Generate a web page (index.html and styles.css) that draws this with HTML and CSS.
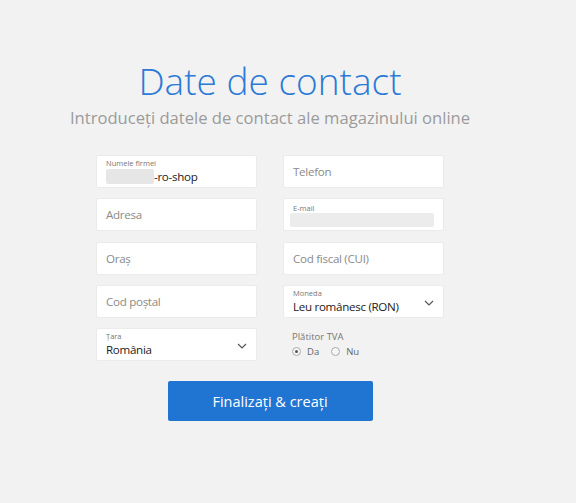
FILE: index.html
```html
<!DOCTYPE html>
<html lang="ro">
<head>
    <meta charset="UTF-8">
    <meta name="viewport" content="width=device-width, initial-scale=1.0">
    <title>Date de contact</title>
    <link rel="stylesheet" href="styles.css">
</head>
<body>
    <div class="page">
        <h1 class="title">Date de contact</h1>
        <p class="subtitle">Introduceți datele de contact ale magazinului online</p>

        <form class="contact-form">
            <div class="grid">
                <div class="field filled">
                    <span class="label">Numele firmei</span>
                    <span class="value"><span class="blur name-blur"></span>-ro-shop</span>
                </div>
                <div class="field"><span class="placeholder">Telefon</span></div>

                <div class="field"><span class="placeholder">Adresa</span></div>
                <div class="field filled">
                    <span class="label">E-mail</span>
                    <span class="value"><span class="blur mail-blur"></span></span>
                </div>

                <div class="field"><span class="placeholder">Oraș</span></div>
                <div class="field"><span class="placeholder">Cod fiscal (CUI)</span></div>

                <div class="field"><span class="placeholder">Cod poștal</span></div>
                <div class="field filled select">
                    <span class="label">Moneda</span>
                    <span class="value">Leu românesc (RON)</span>
                    <svg class="chevron" width="10" height="6" viewBox="0 0 10 6"><path d="M1 1l4 4 4-4" fill="none" stroke="#555" stroke-width="1.2"/></svg>
                </div>

                <div class="field filled select">
                    <span class="label">Țara</span>
                    <span class="value">România</span>
                    <svg class="chevron" width="10" height="6" viewBox="0 0 10 6"><path d="M1 1l4 4 4-4" fill="none" stroke="#555" stroke-width="1.2"/></svg>
                </div>
                <div class="vat">
                    <span class="vat-label">Plătitor TVA</span>
                    <div class="radios">
                        <label class="radio"><span class="dot checked"></span>Da</label>
                        <label class="radio"><span class="dot"></span>Nu</label>
                    </div>
                </div>
            </div>

            <button type="submit" class="submit">Finalizați &amp; creați</button>
        </form>
    </div>
</body>
</html>
```

FILE: styles.css
```css
body {
    margin: 0;
    background-color: #f2f2f2;
    font-family: "Open Sans", "Noto Sans", sans-serif;
    color: #333;
}
.page {
    width: 540px;
    padding-top: 55px;
    text-align: center;
}
.title {
    margin: 0;
    font-size: 37px;
    font-weight: 300;
    line-height: 52px;
    color: #2a7ad6;
}
.subtitle {
    margin: 0;
    font-size: 16.6px;
    font-weight: 400;
    line-height: 22px;
    color: #9b9b9b;
}
.contact-form {
    width: 348px;
    margin: 26px auto 0;
}
.grid {
    display: grid;
    grid-template-columns: 161px 161px;
    grid-auto-rows: 33px;
    column-gap: 26px;
    row-gap: 10.25px;
    text-align: left;
}
.field {
    position: relative;
    box-sizing: border-box;
    background-color: #fff;
    border: 1px solid #ebebeb;
    border-radius: 2px;
    padding: 0 9px;
    display: flex;
    flex-direction: column;
    justify-content: center;
}
.placeholder {
    font-size: 11.6px;
    letter-spacing: -0.3px;
    color: #8a8a8a;
}
.label {
    font-size: 7.5px;
    line-height: 10px;
    color: #777;
}
.value {
    display: flex;
    align-items: center;
    font-size: 11.6px;
    letter-spacing: -0.3px;
    line-height: 17px;
    color: #222;
}
.blur {
    display: inline-block;
    height: 15px;
    background-color: #e6e6e6;
    border-radius: 2px;
}
.name-blur {
    width: 48px;
}
.mail-blur {
    width: 148px;
    height: 14px;
    margin-left: -3px;
    background-color: #ececec;
}
.chevron {
    position: absolute;
    right: 9px;
    top: 14px;
}
.vat {
    padding: 2px 9px 0;
    display: flex;
    flex-direction: column;
    gap: 2px;
}
.vat-label {
    font-size: 9.5px;
    color: #777;
}
.radios {
    display: flex;
    gap: 12px;
}
.radio {
    display: flex;
    align-items: center;
    gap: 6px;
    font-size: 9.5px;
    color: #666;
}
.dot {
    width: 7px;
    height: 7px;
    border: 1px solid #aaa;
    border-radius: 50%;
    background-color: #f6f6f6;
    position: relative;
}
.dot.checked::after {
    content: "";
    position: absolute;
    left: 2px;
    top: 2px;
    width: 3px;
    height: 3px;
    border-radius: 50%;
    background-color: #555;
}
.submit {
    display: block;
    width: 205px;
    height: 40px;
    margin: 20px auto 0;
    border: none;
    border-radius: 2px;
    background-color: #2075d3;
    color: #fff;
    font-family: "Open Sans", "Noto Sans", sans-serif;
    font-size: 14.5px;
    font-weight: 500;
    cursor: pointer;
}
```
